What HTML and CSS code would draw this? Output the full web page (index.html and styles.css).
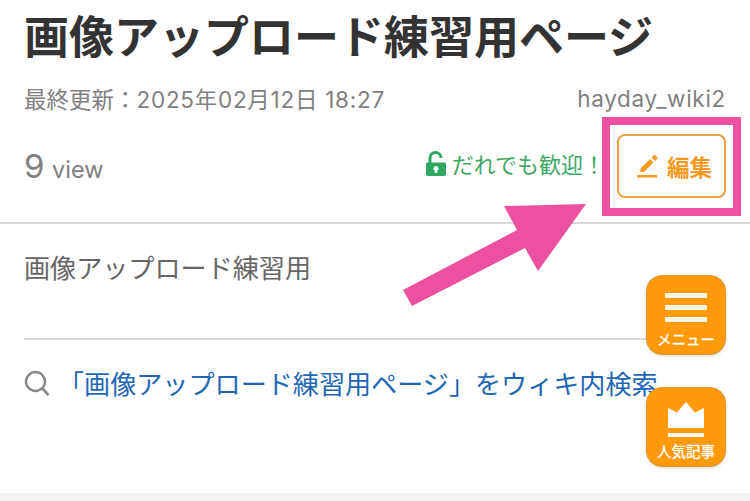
FILE: index.html
```html
<!DOCTYPE html>
<html lang="ja">
<head>
    <meta charset="UTF-8">
    <meta name="viewport" content="width=device-width, initial-scale=1.0">
    <title>画像アップロード練習用ページ</title>
    <link rel="stylesheet" href="styles.css">
</head>
<body>
    <div class="page">
        <header class="page-head">
            <h1 class="title">画像アップロード練習用ページ</h1>
            <div class="meta">
                <span>最終更新：<span class="stamp">2025年02月12日 18:27</span></span>
                <span class="author">hayday_wiki2</span>
            </div>
            <div class="stats">
                <div class="views"><span class="views-num">9</span> view</div>
                <div class="actions">
                    <svg class="lock" viewBox="0 0 22 26" width="22" height="26">
                        <path d="M5 12V7a5.500 5.500 0 0 1 11 0" fill="none" stroke="#2fa85f" stroke-width="3"/>
                        <path fill-rule="evenodd" fill="#2fa85f" d="M2.500 11.500h17a1.500 1.500 0 0 1 1.500 1.500v10a2 2 0 0 1-2 2h-16a2 2 0 0 1-2-2v-10a1.500 1.500 0 0 1 1.500-1.500zM11 15a2.500 2.500 0 0 0-1.200 4.700v2.300h2.400v-2.300a2.500 2.500 0 0 0-1.200-4.700z"/>
                    </svg>
                    <span class="welcome">だれでも歓迎！</span>
                    <a class="edit-btn" href="#">
                        <svg viewBox="0 0 22 24" width="22" height="24">
                            <path fill="#f59a23" d="M14.500 3.500l3 -3 3.500 3.500-3 3zM13 5l3.500 3.500-9.500 9.500h-3.500v-3.500z"/>
                            <rect x="0" y="21" width="20" height="2.500" fill="#f59a23"/>
                        </svg>
                        <span>編集</span>
                    </a>
                </div>
            </div>
        </header>

        <div class="content">
            <p class="body-text">画像アップロード練習用</p>
            <hr class="rule">
            <a class="search-link" href="#">
                <svg viewBox="0 0 26 26" width="26" height="26">
                    <circle cx="11.500" cy="11.500" r="9.500" fill="none" stroke="#888" stroke-width="2.400"/>
                    <path d="M18.500 18.500l6 6.500" stroke="#888" stroke-width="2.600" fill="none"/>
                </svg>
                <span>「画像アップロード練習用ページ」をウィキ内検索</span>
            </a>
        </div>

        <div class="foot-strip"></div>

        <a class="float-btn float-menu" href="#">
            <span class="bars"><i></i><i></i><i></i></span>
            <span class="float-label">メニュー</span>
        </a>
        <a class="float-btn float-rank" href="#">
            <svg viewBox="0 0 36 37" width="36" height="37">
                <path fill="#fff" d="M0 8l9 4.500 9-10.500 9 10.500 9-4.500v20H0z"/>
                <rect x="0" y="33" width="36" height="4" fill="#fff"/>
            </svg>
            <span class="float-label">人気記事</span>
        </a>

        <div class="callout-box"></div>
        <svg class="callout-arrow" viewBox="0 0 750 501" width="750" height="501">
            <polygon fill="#ec519f" points="586,204 538,271 525,248 412,306 403,290 517,230 504,206"/>
        </svg>
    </div>
</body>
</html>
```

FILE: styles.css
```css
* {
    box-sizing: border-box;
}

body {
    margin: 0;
    background: #fff;
    color: #333;
    font-family: Inter, "Noto Sans CJK JP", sans-serif;
}

.page {
    position: relative;
    width: 750px;
    height: 501px;
    overflow: hidden;
    display: flex;
    flex-direction: column;
}

.page-head {
    padding: 0 24px;
    height: 224px;
    border-bottom: 2px solid #d8d8d8;
}

.title {
    margin: 0;
    padding-top: 9px;
    font-size: 45px;
    line-height: 58px;
    font-weight: 700;
    color: #333;
    white-space: nowrap;
}

.meta {
    display: flex;
    justify-content: space-between;
    align-items: center;
    margin-top: 15px;
    height: 32px;
    font-size: 22.500px;
    color: #808080;
}

.stamp {
    letter-spacing: 0.73px;
}

.author {
    letter-spacing: 0.7px;
}

.stats {
    display: flex;
    justify-content: space-between;
    align-items: center;
    margin-top: 20px;
    height: 64px;
}

.views {
    color: #808080;
    font-size: 23.500px;
}

.views-num {
    font-size: 33px;
    margin-right: 1px;
}

.actions {
    display: flex;
    align-items: center;
}

.lock {
    margin-right: 5px;
    margin-bottom: 5px;
}

.welcome {
    color: #3ea866;
    font-size: 22px;
    margin-right: 12px;
    margin-bottom: 6px;
}

.edit-btn {
    display: flex;
    align-items: center;
    justify-content: center;
    gap: 8px;
    width: 109px;
    height: 64px;
    padding-left: 6px;
    border: 2px solid #ee9f3e;
    border-radius: 8px;
    color: #f59a23;
    font-size: 22.500px;
    font-weight: 700;
    text-decoration: none;
}

.content {
    flex: 1;
    padding: 0 24px;
}

.body-text {
    margin: 26px 0 0;
    font-size: 26.100px;
    line-height: 38px;
    color: #666;
}

.rule {
    margin: 50px 0 0;
    border: 0;
    border-top: 2px solid #d8d8d8;
}

.search-link {
    display: flex;
    align-items: center;
    gap: 8px;
    margin-top: 25px;
    height: 36px;
    color: #1f66b5;
    font-size: 26.100px;
    text-decoration: none;
    white-space: nowrap;
}

.foot-strip {
    height: 8px;
    background: #f2f2f2;
}

.float-btn {
    position: absolute;
    left: 646px;
    width: 80px;
    height: 80px;
    display: flex;
    flex-direction: column;
    align-items: center;
    background: #ff9a0d;
    border: 1px solid #e0952e;
    border-radius: 16px;
    color: #fff;
    text-decoration: none;
    box-shadow: 0 1px 3px rgba(0, 0, 0, 0.15);
}

.float-menu {
    top: 275px;
    padding-top: 17px;
}

.float-rank {
    top: 387px;
    padding-top: 12px;
}

.bars {
    display: flex;
    flex-direction: column;
    gap: 7px;
    width: 42px;
}

.bars i {
    display: block;
    height: 5px;
    background: #fff5e6;
}

.float-label {
    font-size: 14.500px;
    line-height: 18px;
    white-space: nowrap;
    -webkit-text-stroke: 0.3px #fff;
}

.float-menu .float-label {
    margin-top: 9px;
}

.float-rank .float-label {
    margin-top: 6px;
}

.callout-box {
    position: absolute;
    left: 602px;
    top: 117px;
    width: 139px;
    height: 99px;
    border: 8px solid #ec519f;
}

.callout-arrow {
    position: absolute;
    left: 0;
    top: 0;
    pointer-events: none;
}
```
